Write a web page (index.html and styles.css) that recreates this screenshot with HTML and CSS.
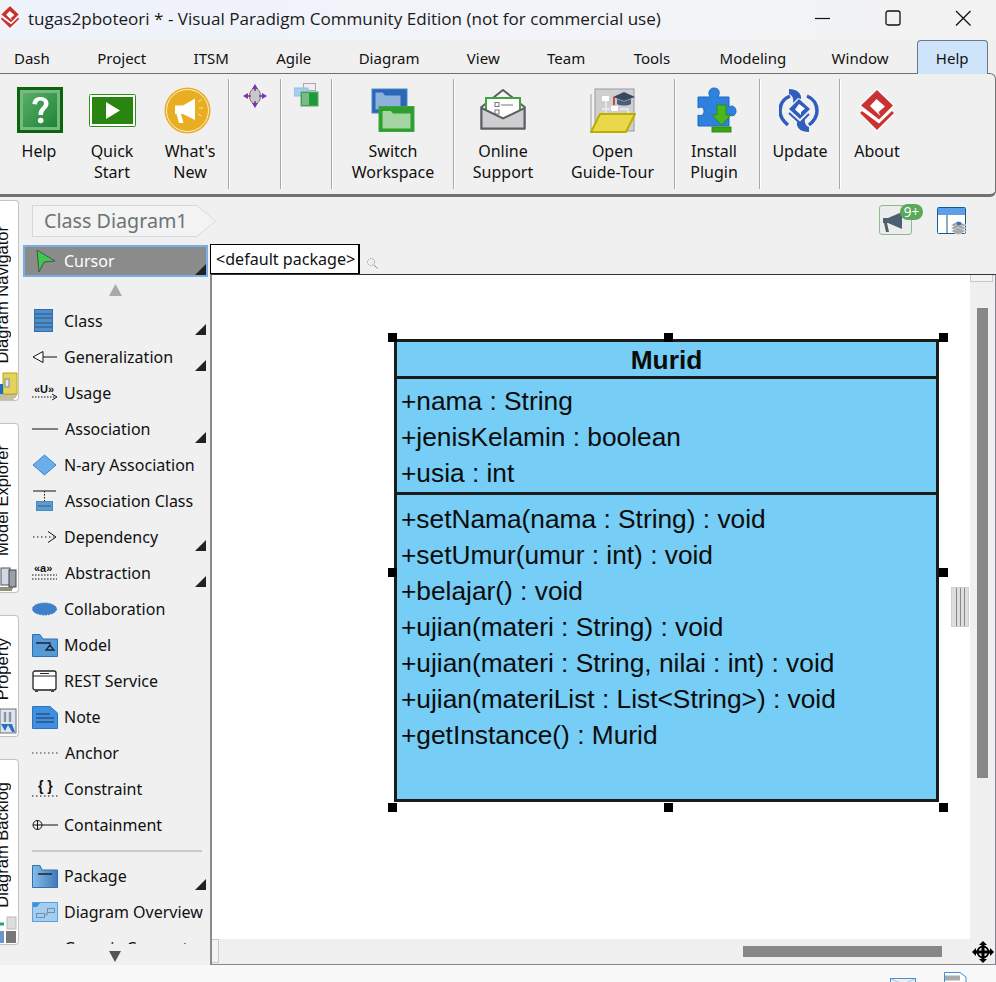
FILE: index.html
```html
<!DOCTYPE html>
<html lang="en">
<head>
<meta charset="utf-8">
<title>tugas2pboteori</title>
<link rel="stylesheet" href="styles.css">
</head>
<body>
<svg class="defs" width="0" height="0">
  <symbol id="vp" viewBox="0 0 36 44">
    <path d="M18 0L36 17.500L32 21.500L36 25L18 44L0 25L4 21.500L0 17.500Z" fill="#fff"/>
    <path d="M18 2L34 17.500L20 31.500L2 17.500Z" fill="#c93232"/>
    <path d="M17.500 11L26 18.500L19.500 24L21.500 28L15 22L11 18Z" fill="#fff"/>
    <path d="M3 23L20 35.500L33 23L35 25L18 42L1 25Z" fill="#c93232"/>
  </symbol>
</svg>
<div class="app">
  <header class="titlebar">
    <svg class="title-logo"><use href="#vp"/></svg>
    <span class="title-text">tugas2pboteori * - Visual Paradigm Community Edition (not for commercial use)</span>
    <div class="win-controls">
      <svg class="win-btn" viewBox="0 0 16 16"><path d="M0 8.500H15" stroke="#111" stroke-width="1.200"/></svg>
      <svg class="win-btn" viewBox="0 0 16 16"><rect x="1" y="1" width="14" height="14" rx="2" fill="none" stroke="#111" stroke-width="1.300"/></svg>
      <svg class="win-btn" viewBox="0 0 16 16"><path d="M1 1L15.500 15.500M15.500 1L1 15.500" stroke="#111" stroke-width="1.300"/></svg>
    </div>
  </header>

  <nav class="tabs">
    <span>Dash</span><span>Project</span><span>ITSM</span><span>Agile</span><span>Diagram</span><span>View</span><span>Team</span><span class="tab-tools">Tools</span><span class="tab-modeling">Modeling</span><span class="tab-window">Window</span><span class="tab-active">Help</span>
  </nav>

  <section class="ribbon">
    <div class="rb-item w-help">
      <svg class="rb-icon ico-help" width="46" height="47" viewBox="0 0 46 47">
        <defs><linearGradient id="hg" x1="0" y1="0" x2="1" y2="1"><stop offset="0" stop-color="#5aae68"/><stop offset="1" stop-color="#1f8435"/></linearGradient></defs>
        <rect width="46" height="46" fill="#0a660a"/><rect x="3" y="3" width="40" height="40" fill="#78b884"/><rect x="6" y="6" width="34" height="34" fill="url(#hg)"/>
        <path d="M15.500 17C15.500 12.500 19 10 23.500 10C28 10 31.500 12.500 31.500 16.500C31.500 22 26 22 26 28H21.500C21.500 20 27 20.500 27 16.500C27 14.500 25.500 13.500 23.500 13.500C21.500 13.500 20 15 20 17.500Z" fill="#fff"/><circle cx="23.700" cy="33.500" r="2.800" fill="#fff"/>
      </svg>
      <span>Help</span>
    </div>
    <div class="rb-item w-quick">
      <svg class="rb-icon" width="47" height="47" viewBox="0 0 47 47">
        <rect x="0.500" y="7.500" width="46" height="32" rx="1" fill="#fff" stroke="#2f8f14"/><rect x="3" y="10" width="41" height="27" fill="#2a8510"/><path d="M17 15V32L31 23.500Z" fill="#fff"/>
      </svg>
      <span>Quick<br>Start</span>
    </div>
    <div class="rb-item w-whats">
      <svg class="rb-icon whats-icon" width="47" height="47" viewBox="0 0 47 47">
        <circle cx="23.500" cy="23.500" r="23" fill="#e9ad22"/><circle cx="23.500" cy="23.500" r="21" fill="none" stroke="#fff" stroke-width="0.800"/>
        <path d="M11 18.500H19L31 11.500V33L19 27H17L19.500 36H15L12.500 27H11Z" fill="#fff"/><path d="M34 15L37.500 12.500M35 21H39M34 27L37.500 29" stroke="#f6e0a8" stroke-width="1"/>
      </svg>
      <span>What's<br>New</span>
    </div>
    <i class="rb-sep"></i>
    <div class="rb-item w-small">
      <svg class="rb-icon small-a" width="24" height="24" viewBox="0 0 24 24">
        <ellipse cx="12" cy="12" rx="5.500" ry="8" fill="#c9c9c4" stroke="#777"/><path d="M12 0L15 5H9ZM12 24L15 19H9ZM0 12L5 9V15ZM24 12L19 9V15Z" fill="#7a2fb4"/><path d="M5 12H8M16 12H19M12 5V7M12 17V19" stroke="#7a2fb4" stroke-width="1.500"/>
      </svg>
    </div>
    <i class="rb-sep"></i>
    <div class="rb-item w-small2">
      <svg class="rb-icon small-b" width="25" height="24" viewBox="0 0 25 24">
        <rect x="9.500" y="0.500" width="12" height="7" fill="#eee" stroke="#aaa"/><rect x="0" y="5" width="14" height="8" fill="#a8cdf2" stroke="#8ebaea"/><rect x="7" y="9" width="17" height="14" fill="#1c9a3c" stroke="#5aa86c"/><rect x="8" y="10" width="7" height="12" fill="#7dbb86"/>
      </svg>
    </div>
    <i class="rb-sep"></i>
    <div class="rb-item w-switch">
      <svg class="rb-icon drop1" width="44" height="45" viewBox="0 0 44 45">
        <rect x="1" y="1" width="35" height="24" fill="#2a67b5" stroke="#4d88cc"/><path d="M4 4H12L14 7H30V22H4Z" fill="#8eb0dc" stroke="#2a67b5"/>
        <rect x="8" y="18.500" width="35" height="25" fill="#2f9e2f" stroke="#3fa63f"/><path d="M11 22.500H20L22 25H40V41H11Z" fill="#a4d4a2" stroke="#2f9e2f"/>
      </svg>
      <span>Switch<br>Workspace</span>
    </div>
    <i class="rb-sep"></i>
    <div class="rb-item w-online">
      <svg class="rb-icon drop2" width="46" height="42" viewBox="0 0 46 42">
        <path d="M1.500 18L23 1L44.500 18V39.500H1.500Z" fill="#f4f4f4" stroke="#5a5f66" stroke-width="2"/>
        <rect x="6" y="9" width="34" height="20" fill="#fff" stroke="#41a33f" stroke-width="2"/><rect x="15" y="13.500" width="4" height="4" fill="none" stroke="#777"/><rect x="15" y="21" width="4" height="4" fill="none" stroke="#777"/><path d="M21 16H33" stroke="#777"/>
        <path d="M1.500 19L23 29.500L44.500 19V39.500H1.500Z" fill="#cfcfcf" stroke="#5a5f66" stroke-width="2"/>
      </svg>
      <span>Online<br>Support</span>
    </div>
    <div class="rb-item w-guide">
      <svg class="rb-icon drop1" width="46" height="46" viewBox="0 0 46 46">
        <rect x="5" y="1" width="39" height="42" fill="#cfcfcf" stroke="#999"/><path d="M1 6V44" stroke="#bbb" stroke-width="1.500"/>
        <rect x="12" y="8" width="7" height="5" fill="#fff"/><rect x="21" y="18" width="7" height="5" fill="#fff"/><path d="M12 21H20M16 13V21M16 21V26M30 21H38V26" stroke="#eee" stroke-width="1.500" fill="none"/>
        <path d="M34 4L45 9L34 13L23 9Z" fill="#38495e"/><path d="M27 11V16C30 18 38 18 41 16V11L34 13.500Z" fill="#4a5f7a"/><path d="M24 9V17" stroke="#cc4444" stroke-width="2"/>
        <path d="M10 26H45L36 44H1Z" fill="#e8d84a" stroke="#bcae00" stroke-width="2"/>
      </svg>
      <span>Open<br>Guide-Tour</span>
    </div>
    <i class="rb-sep"></i>
    <div class="rb-item w-install">
      <svg class="rb-icon ico-install" width="40" height="47" viewBox="0 0 40 47">
        <path d="M1 10H13C10 4 14 1 17 1C21 1 24 4 21 10H32V20C37 17 39 22 39 24C39 28 36 30 32 28V39H1V28C6 30 7 26 7 24C7 21 5 19 1 21Z" fill="#2f81e0" stroke="#1d69c4"/>
        <path d="M20 18H29V28H34L24.500 38L15 28H20Z" fill="#4ab81c" stroke="#2c8f0a"/><rect x="15" y="40" width="19" height="5" fill="#3aa510" stroke="#2c8f0a"/>
      </svg>
      <span>Install<br>Plugin</span>
    </div>
    <i class="rb-sep"></i>
    <div class="rb-item w-update">
      <svg class="rb-icon drop1 ico-update" width="40" height="45" viewBox="0 0 40 45">
        <path d="M11 8C4 11 1 17 1 23C1 29 4 33 9 37" fill="none" stroke="#2e5dbd" stroke-width="3.500"/><path d="M28 8C35 11 38 17 38 23C38 29 35 33 30 37" fill="none" stroke="#2e5dbd" stroke-width="3.500"/>
        <path d="M10 1C17 1 23 5 22 11L19 10L14 15C15 10 13 7 10 6Z" fill="#2e5dbd"/><path d="M30 44C22 44 17 40 18 34L21 35L26 30C25 35 27 38 30 39Z" fill="#2e5dbd"/>
        <path d="M20 11L31 21L21 31L10 21Z" fill="#2e5dbd"/><path d="M20 16L26 20.500L22 24L22 27L16 21.500Z" fill="#fff"/><path d="M10 25L21 35L30 26" fill="none" stroke="#2e5dbd" stroke-width="2"/>
      </svg>
      <span>Update</span>
    </div>
    <i class="rb-sep"></i>
    <div class="rb-item w-about">
      <svg class="rb-icon drop1" width="36" height="44"><use href="#vp"/></svg>
      <span>About</span>
    </div>
  </section>

  <main class="workspace">
    <aside class="rail">
      <div class="side-tab t1">
        <span class="side-label">Diagram Navigator</span>
        <svg class="side-icon" width="18" height="28" viewBox="0 0 18 28"><rect x="3" y="1" width="14" height="21" fill="#e4d25a" stroke="#b8a810"/><rect x="5" y="7" width="4" height="8" fill="#dfe7f4" stroke="#7d8aa0"/><rect x="0" y="12" width="3" height="10" fill="#1a70c0"/><path d="M0 23H17M0 25H16M0 27H14" stroke="#8a7f48"/></svg>
      </div>
      <div class="side-tab t2">
        <span class="side-label">Model Explorer</span>
        <svg class="side-icon" width="18" height="28" viewBox="0 0 18 28"><rect x="1" y="4" width="9" height="17" fill="#cfd8e6" stroke="#555"/><rect x="9" y="6" width="7" height="17" fill="#9aa0a5" stroke="#444"/><path d="M0 24H13M0 26H12" stroke="#6e6e50" stroke-width="1.500"/></svg>
      </div>
      <div class="side-tab t3">
        <span class="side-label">Property</span>
        <svg class="side-icon" width="18" height="28" viewBox="0 0 18 28"><rect x="0" y="1" width="16" height="24" fill="#dfe5ee" stroke="#6b7179"/><path d="M5 4V14M10 4V14" stroke="#8b95a5" stroke-width="2.500"/><path d="M1 16L5 23L8 17L12 24H15L12 16" fill="#2d6fc0"/></svg>
      </div>
      <div class="side-tab t4">
        <span class="side-label">Diagram Backlog</span>
        <svg class="side-icon" width="18" height="28" viewBox="0 0 18 28"><path d="M0 8H4" stroke="#2a9d8f" stroke-width="3"/><rect x="7" y="1" width="9" height="12" fill="#ddd" stroke="#bbb"/><rect x="0" y="15" width="4" height="12" fill="#6b96c9"/><rect x="6" y="15" width="10" height="12" fill="#777"/></svg>
      </div>
    </aside>

    <div class="main">
      <div class="doc-bar">
        <div class="crumb">Class Diagram1</div>
        <div class="doc-tools">
          <div class="announce">
            <svg width="24" height="22" viewBox="0 0 24 22"><path d="M1 7H6L20 1V18L6 12H5L7 21H4L2 12H1Z" fill="#4d6072"/></svg>
            <span class="badge">9+</span>
          </div>
          <svg class="layers" width="30" height="29" viewBox="0 0 30 29">
            <rect x="0.500" y="0.500" width="28" height="26" rx="1" fill="#fff" stroke="#145a8a"/><rect x="1" y="1" width="27" height="7" fill="#5b9fe6"/><path d="M10 8V26" stroke="#145a8a"/>
            <path d="M14 18L21 14L29 18L21 22Z" fill="#9aa0a0" stroke="#fff" stroke-width="0.500"/><path d="M14 21L21 17L29 21L21 25Z" fill="#9aa0a0" stroke="#fff" stroke-width="0.500"/><path d="M14 24L21 20L29 24L21 28Z" fill="#aaa" stroke="#fff" stroke-width="0.500"/><path d="M20 15H24V18H20Z" fill="#3a6fd0"/>
          </svg>
        </div>
      </div>

      <div class="editor-area">
        <div class="palette">
          <div class="cursor-row">
            <svg class="p-ico" width="22" height="24" viewBox="0 0 20 24"><path d="M1 1L19 12L8 13L3 23Z" fill="#3fc850" stroke="#3e5a44"/></svg>
            <span>Cursor</span><i class="tri"></i>
          </div>
          <div class="arrow-up"></div>
          <div class="p-list">
            <div class="p-row"><svg class="p-ico" width="25" height="24" viewBox="0 0 25 24"><rect x="2.500" y="0.500" width="18" height="22" fill="#4d8fd0" stroke="#2f6fb0"/><path d="M3 5H20M3 9H20M3 14H20M3 18H20" stroke="#33556f"/></svg><span>Class</span><i class="tri"></i></div>
            <div class="p-row"><svg class="p-ico" width="25" height="14" viewBox="0 0 25 14"><path d="M1 7L11 1.500V12.500Z" fill="#fff" stroke="#111"/><path d="M11 7H25" stroke="#111"/></svg><span>Generalization</span><i class="tri"></i></div>
            <div class="p-row"><svg class="p-ico" width="26" height="18" viewBox="0 0 26 18"><text x="2" y="9" class="ico-text">«U»</text><path d="M0 13H24" stroke="#111" stroke-dasharray="1.500 1.500"/><path d="M20 10L25 13L20 16" fill="none" stroke="#111"/></svg><span>Usage</span></div>
            <div class="p-row"><svg class="p-ico" width="26" height="4" viewBox="0 0 26 4"><path d="M0 2H26" stroke="#111"/></svg><span class="nudge">Association</span><i class="tri"></i></div>
            <div class="p-row"><svg class="p-ico" width="25" height="22" viewBox="0 0 25 22"><path d="M12.500 1L24 11L12.500 21L1 11Z" fill="#6aaeea" stroke="#3a86cf"/></svg><span>N-ary Association</span></div>
            <div class="p-row"><svg class="p-ico" width="25" height="22" viewBox="0 0 25 22"><path d="M1 1H24" stroke="#111"/><path d="M12.500 1V11" stroke="#111" stroke-dasharray="1.500 1.500"/><rect x="4.500" y="11.500" width="16" height="9" fill="#5d9bd0" stroke="#4a88c0"/><path d="M6 16H19" stroke="#2f5f8a"/></svg><span class="nudge">Association Class</span></div>
            <div class="p-row"><svg class="p-ico" width="25" height="14" viewBox="0 0 25 14"><path d="M1 7H22" stroke="#111" stroke-dasharray="1.500 2.500"/><path d="M16 1.500L24 7L16 12.500" fill="none" stroke="#111"/></svg><span>Dependency</span><i class="tri"></i></div>
            <div class="p-row"><svg class="p-ico" width="26" height="18" viewBox="0 0 26 18"><text x="2" y="8" class="ico-text">«a»</text><path d="M0 11H25M0 15H25" stroke="#111" stroke-dasharray="1.500 1.500"/></svg><span class="nudge">Abstraction</span><i class="tri"></i></div>
            <div class="p-row"><svg class="p-ico" width="25" height="14" viewBox="0 0 25 14"><ellipse cx="12.500" cy="7" rx="12" ry="6" fill="#3f80c8" stroke="#3f80c8" stroke-dasharray="2 1"/></svg><span>Collaboration</span></div>
            <div class="p-row"><svg class="p-ico" width="26" height="23" viewBox="0 0 26 23"><path d="M0.500 0.500H8L11 5H25.500V22.500H0.500Z" fill="#569ad8" stroke="#2f6fb8"/><path d="M4 9H18V11M18 11L14 16H22Z" stroke="#223" fill="none" stroke-width="1.300"/></svg><span>Model</span></div>
            <div class="p-row"><svg class="p-ico" width="25" height="23" viewBox="0 0 25 23"><rect x="1" y="1" width="23" height="19" rx="2" fill="#fff" stroke="#222" stroke-width="1.300"/><path d="M1 6H24M8 3.500H17" stroke="#222"/><rect x="3" y="20" width="3" height="2" fill="#444"/><rect x="19" y="20" width="3" height="2" fill="#444"/></svg><span>REST Service</span></div>
            <div class="p-row"><svg class="p-ico" width="26" height="23" viewBox="0 0 26 23"><path d="M0.500 0.500H18L25.500 7V22.500H0.500Z" fill="#3f90e0" stroke="#2a74c2"/><path d="M4 8H18M4 12H22M4 16H22" stroke="#22344f"/></svg><span>Note</span></div>
            <div class="p-row"><svg class="p-ico" width="26" height="4" viewBox="0 0 26 4"><path d="M0 2H26" stroke="#333" stroke-dasharray="1.500 2.500"/></svg><span class="nudge">Anchor</span></div>
            <div class="p-row"><svg class="p-ico" width="26" height="20" viewBox="0 0 26 20"><text x="6" y="12" class="ico-brace">{ }</text><path d="M0 17H26" stroke="#111" stroke-dasharray="1.500 2.500"/></svg><span>Constraint</span></div>
            <div class="p-row"><svg class="p-ico" width="26" height="12" viewBox="0 0 26 12"><circle cx="5.500" cy="6" r="4.500" fill="none" stroke="#111"/><path d="M1 6H26M5.500 1.500V10.500" stroke="#111"/></svg><span>Containment</span></div>
            <hr class="p-sep">
            <div class="p-row"><svg class="p-ico" width="26" height="23" viewBox="0 0 26 23"><defs><linearGradient id="pk" x1="0" y1="0" x2="1" y2="0"><stop offset="0" stop-color="#86bce8"/><stop offset="1" stop-color="#3f79b8"/></linearGradient></defs><path d="M0.500 0.500H8L10 5H25.500V22.500H0.500Z" fill="url(#pk)" stroke="#2f6fb8"/><path d="M6 9H20" stroke="#222" stroke-width="1.500"/></svg><span>Package</span><i class="tri"></i></div>
            <div class="p-row"><svg class="p-ico" width="26" height="20" viewBox="0 0 26 20"><rect x="0.500" y="0.500" width="25" height="19" fill="#a7cdee" stroke="#5aa0e0"/><path d="M1 1H8L5 5H1Z" fill="#3f90e0"/><rect x="4.500" y="11.500" width="8" height="4" fill="none" stroke="#6f8fb0"/><rect x="15.500" y="6.500" width="7" height="4" fill="none" stroke="#6f8fb0"/><path d="M12 13H15V10" fill="none" stroke="#6f8fb0"/></svg><span>Diagram Overview</span></div>
            <div class="p-row"><span class="p-blank"></span><span>Generic Connector</span></div>
          </div>
          <div class="arrow-down"></div>
        </div>

        <div class="editor">
          <div class="tag-row">
            <div class="pkg-tag">&lt;default package&gt;</div>
            <svg class="lens" width="12" height="12" viewBox="0 0 12 12"><circle cx="5" cy="5" r="3.500" fill="none" stroke="#999" stroke-dasharray="1.500 1"/><path d="M8 8L11.500 11.500" stroke="#888"/></svg>
          </div>
          <div class="frame">
            <div class="canvas">
              <div class="uml-class">
                <div class="uml-name">Murid</div>
                <div class="uml-part">
                  <div>+nama : String</div>
                  <div>+jenisKelamin : boolean</div>
                  <div>+usia : int</div>
                </div>
                <div class="uml-part uml-ops">
                  <div>+setNama(nama : String) : void</div>
                  <div>+setUmur(umur : int) : void</div>
                  <div>+belajar() : void</div>
                  <div>+ujian(materi : String) : void</div>
                  <div>+ujian(materi : String, nilai : int) : void</div>
                  <div>+ujian(materiList : List&lt;String&gt;) : void</div>
                  <div>+getInstance() : Murid</div>
                </div>
              </div>
              <i class="hd hx1 hy1"></i><i class="hd hx2 hy1"></i><i class="hd hx3 hy1"></i>
              <i class="hd hx1 hy2"></i><i class="hd hx3 hy2"></i>
              <i class="hd hx1 hy3"></i><i class="hd hx2 hy3"></i><i class="hd hx3 hy3"></i>
              <div class="grip"></div>
            </div>
            <div class="vscroll"><div class="v-btn"></div><div class="v-thumb"></div></div>
            <div class="hscroll"><div class="h-btn"></div><div class="h-thumb"></div></div>
            <div class="corner">
              <svg width="22" height="22" viewBox="0 0 22 22"><path d="M11 0L15 4H12.500V9.500H18V7L22 11L18 15V12.500H12.500V18H15L11 22L7 18H9.500V12.500H4V15L0 11L4 7V9.500H9.500V4H7Z" fill="#000"/><circle cx="11" cy="11" r="5.500" fill="none" stroke="#000" stroke-width="1.800"/></svg>
            </div>
          </div>
        </div>
      </div>
    </div>
  </main>

  <footer class="status">
    <svg class="st-mail" width="26" height="4" viewBox="0 0 26 4"><rect x="0.500" y="0.500" width="25" height="10" fill="#eee" stroke="#3f90e0"/><path d="M1 1L13 6L25 1" fill="none" stroke="#9dc6ee"/></svg>
    <svg class="st-doc" width="23" height="10" viewBox="0 0 23 10"><path d="M0.500 12V0.500H16L22 5V12" fill="#fff" stroke="#3f90e0"/><path d="M1 6H16" stroke="#aaa" stroke-width="5"/></svg>
  </footer>
</div>
</body>
</html>
```
FILE: styles.css
```css
* { box-sizing: border-box; }
html, body { margin: 0; padding: 0; }
body { width: 996px; height: 982px; overflow: hidden; background: #f0f0f0; font-family: "Noto Sans", sans-serif; color: #111; }
.defs { position: absolute; }
.app { display: flex; flex-direction: column; width: 996px; height: 982px; }

.titlebar { height: 40px; display: flex; align-items: center; padding-bottom: 4px; background: linear-gradient(90deg, #eef2fa, #f2f4f8 60%, #f2f2f2); flex: none; }
.title-logo { width: 20px; height: 24px; margin: -3px 8px 0 0; flex: none; }
.title-text { font-family: "Open Sans", sans-serif; font-size: 17.080px; color: #1a1a1a; white-space: nowrap; }
.win-controls { margin-left: auto; margin-right: -2px; display: flex; }
.win-btn { width: 16px; height: 16px; margin: 0 27px; }

.tabs { height: 33px; flex: none; display: flex; gap: 47.400px; padding: 0 0 0 14px; align-items: flex-end; font-size: 15px; line-height: 30px; background: #f0f0f0; position: relative; z-index: 1; }
.tabs span { display: block; height: 32px; padding-top: 2px; color: #111; }
.tabs .tab-tools { margin-left: 1px; }
.tabs .tab-modeling { margin-left: 2px; }
.tabs .tab-window { margin-left: -2px; }
.tabs .tab-active { padding: 2px 18px 0; margin: 0 -18px -1px -19px; background: #cde4fb; border: 1px solid #6d7880; border-bottom: 0; border-radius: 4px 4px 0 0; height: 34px; }

.ribbon { height: 124px; flex: none; display: flex; align-items: stretch; padding: 5px 0 5px; background: #f0f0f0; border-top: 1px solid #707070; border-right: 1px solid #707070; border-bottom: 3px solid #707070; border-radius: 0 6px 6px 0; }
.rb-item { display: grid; grid-template-rows: 54px auto; justify-items: center; align-content: start; font-size: 16px; line-height: 21px; text-align: center; padding-top: 8px; color: #111; }
.rb-icon { display: block; }
.rb-sep { width: 2px; background: linear-gradient(90deg, #a8a8a8 50%, #fff 50%); flex: none; }
.w-help { width: 78px; }
.w-quick { width: 68px; }
.w-whats { width: 76px; margin-left: 6px; }
.w-small { width: 50px; }
.w-small2 { width: 49px; }
.w-switch { width: 120px; }
.w-online { width: 96px; }
.w-guide { width: 123px; }
.w-install { width: 83px; padding-right: 7px; }
.w-update { width: 78px; }
.w-about { width: 72px; }
.ico-help { margin-left: 2px; }
.whats-icon { margin-left: -6px; }
.small-a { margin-top: -3px; }
.small-b { margin-top: -4px; }
.drop1 { margin-top: 1px; }
.drop2 { margin-top: 2px; }
.ico-install { margin-left: 5px; }
.ico-update { margin-left: -2px; }

.workspace { flex: 1; min-height: 0; display: flex; background: #f0f0f0; }
.rail { width: 23px; flex: none; }
.side-tab { width: 19px; margin-top: 22px; background: #fff; border: 1px solid #c4c4c4; border-left: 0; border-radius: 0 4px 4px 0; display: flex; flex-direction: column; justify-content: flex-end; overflow: hidden; }
.side-tab.t1 { height: 201px; margin-top: 3px; }
.side-tab.t2 { height: 170px; }
.side-tab.t3 { height: 122px; }
.side-tab.t4 { height: 186px; }
.side-label { writing-mode: vertical-rl; transform: rotate(180deg); font-family: "Liberation Sans", sans-serif; font-size: 16.500px; line-height: 20px; white-space: nowrap; margin-left: -8px; margin-bottom: 8px; color: #111; }
.side-icon { display: block; flex: none; }

.main { flex: 1; min-width: 0; display: flex; flex-direction: column; }
.doc-bar { height: 47px; flex: none; display: flex; align-items: flex-start; justify-content: space-between; }
.crumb { position: relative; margin: 8px 0 0 9px; width: 184px; height: 32px; padding-left: 12px; font-size: 19.700px; line-height: 31px; color: #6c7378; background: #d3d8dc; clip-path: polygon(0 0, 165px 0, 100% 50%, 165px 100%, 0 100%); z-index: 0; }
.crumb::before { content: ""; position: absolute; inset: 1px; background: #f3f3f3; clip-path: polygon(0 0, 164px 0, 100% 50%, 164px 100%, 0 100%); z-index: -1; }
.doc-tools { display: flex; align-items: flex-start; margin-right: 29px; gap: 13px; }
.announce { position: relative; width: 33px; height: 30px; margin-top: 8px; border: 1px solid #8fb98f; border-radius: 3px; background: #ececec; display: flex; align-items: center; padding: 3px 0 0 2px; }
.badge { position: absolute; left: 20px; top: -2px; width: 23px; height: 16px; border-radius: 8px; background: #5aa85a; color: #fff; font-size: 13.500px; line-height: 16px; text-align: center; }
.layers { margin-top: 10px; margin-left: 12px; }

.editor-area { flex: 1; min-height: 0; display: flex; }
.palette { width: 187px; flex: none; display: flex; flex-direction: column; font-size: 16px; color: #111; }
.cursor-row { height: 32px; margin-top: 1px; width: 185px; display: flex; align-items: center; background: #8b8b8b; border: 2px solid #78aee6; color: #fff; padding-left: 10px; position: relative; }
.cursor-row .p-ico { margin-right: 7px; }
.cursor-row .tri { position: absolute; right: 0; bottom: 0; }
.p-ico { flex: none; }
.arrow-up { flex: none; width: 13px; height: 12px; margin: 7px 0 7px 86px; background: #a9a9a9; clip-path: polygon(50% 0, 100% 100%, 0 100%); }
.p-list { height: 641px; flex: none; overflow: hidden; }
.p-row { height: 36px; display: flex; align-items: center; padding-left: 9px; position: relative; }
.p-row .p-ico { margin-right: 7px; }
.p-row .p-ico[width="26"] { margin-right: 6px; }
.nudge { margin-left: 1px; }
.p-blank { width: 32px; flex: none; }
.tri { position: absolute; right: 4px; bottom: 4px; width: 11px; height: 11px; background: #222; clip-path: polygon(100% 0, 100% 100%, 0 100%); display: block; }
.p-sep { margin: 7px 9px 6px 9px; height: 2px; width: 170px; border: 0; background: #c9c9c9; }
.ico-text { font-family: "Liberation Sans", sans-serif; font-size: 11px; font-weight: 700; fill: #111; }
.ico-brace { font-family: "Liberation Sans", sans-serif; font-size: 14px; font-weight: 700; fill: #111; }
.arrow-down { flex: none; width: 12px; height: 11px; margin: 7px 0 0 86px; background: #555; clip-path: polygon(0 0, 100% 0, 50% 100%); }

.editor { flex: 1; min-width: 0; display: flex; flex-direction: column; }
.tag-row { height: 30px; flex: none; display: flex; align-items: flex-end; }
.pkg-tag { width: 150px; height: 30px; background: #fff; border: 1px solid #000; border-width: 1px 2px 1px 1px; padding-left: 5px; font-size: 16.100px; line-height: 28px; white-space: nowrap; color: #111; }
.lens { margin: 0 0 5px 6px; }
.frame { flex: 1; min-height: 0; display: grid; grid-template-columns: 758px 26px; grid-template-rows: 664px 26px; border-top: 1px solid #333; border-left: 2px solid #8a8a8a; background: #efefef; }
.canvas { position: relative; background: #fff; overflow: hidden; }
.uml-class { position: absolute; left: 182px; top: 64px; width: 545px; height: 463px; background: #76cdf5; border: 3px solid #1b1b1b; font-family: "Liberation Sans", sans-serif; font-size: 26.300px; line-height: 36px; color: #0c0c0c; display: flex; flex-direction: column; }
.uml-name { height: 34px; flex: none; text-align: center; font-weight: 700; line-height: 36px; }
.uml-part { flex: none; height: 116px; padding: 4px 0 0 4px; border-top: 3px solid #1b1b1b; white-space: nowrap; }
.uml-ops { flex: 1; height: auto; padding-top: 6px; }
.hd { position: absolute; width: 9px; height: 9px; background: #000; display: block; }
.hx1 { left: 176px; }
.hx2 { left: 452px; }
.hx3 { left: 727px; }
.hy1 { top: 58px; }
.hy2 { top: 293px; }
.hy3 { top: 528px; }
.grip { position: absolute; left: 739px; top: 312px; width: 18px; height: 40px; background: linear-gradient(90deg, transparent 4px, #888 4px, #888 5px, transparent 5px, transparent 8px, #888 8px, #888 9px, transparent 9px, transparent 12px, #888 12px, #888 13px, transparent 13px), #dedede; border: 1px solid #cfcfcf; }
.vscroll { border-right: 1px solid #85858f; display: flex; flex-direction: column; }
.v-btn { height: 7px; width: 23px; background: #f3f3f3; border: 1px solid #c8c8c8; border-top: 0; flex: none; }
.v-thumb { width: 11px; height: 470px; margin: 26px 0 0 7px; background: #878787; flex: none; }
.hscroll { border-bottom: 1px solid #85858f; display: flex; align-items: flex-start; }
.h-btn { width: 7px; height: 24px; flex: none; background: #f3f3f3; border: 1px solid #c8c8c8; border-left: 0; }
.h-thumb { width: 199px; height: 11px; margin: 7px 0 0 524px; background: #878787; flex: none; }
.corner { border-right: 1px solid #85858f; border-bottom: 1px solid #85858f; display: flex; align-items: center; justify-content: center; padding-top: 1px; }

.status { height: 17px; flex: none; background: #f8f8f8; position: relative; display: flex; justify-content: flex-end; align-items: flex-end; padding-right: 29px; overflow: hidden; }
.st-mail { margin-right: 28px; }
```
